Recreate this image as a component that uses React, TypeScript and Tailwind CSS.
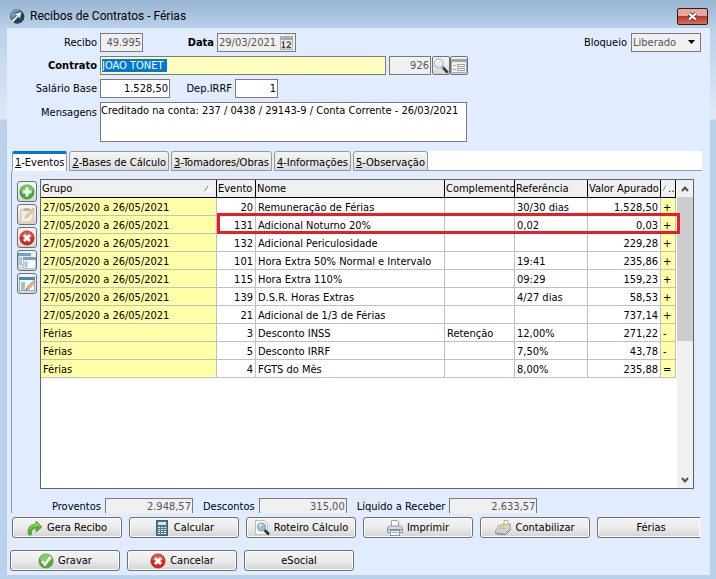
import React, { useEffect, useRef, useState } from "react";

const tabs = ["1-Eventos", "2-Bases de Cálculo", "3-Tomadores/Obras", "4-Informações", "5-Observação"];

const periodo = "27/05/2020 a 26/05/2021";

const eventos = [
  { grupo: periodo, evento: 20, nome: "Remuneração de Férias", compl: "", ref: "30/30 dias", valor: "1.528,50", sinal: "+" },
  { grupo: periodo, evento: 131, nome: "Adicional Noturno 20%", compl: "", ref: "0,02", valor: "0,03", sinal: "+" },
  { grupo: periodo, evento: 132, nome: "Adicional Periculosidade", compl: "", ref: "", valor: "229,28", sinal: "+" },
  { grupo: periodo, evento: 101, nome: "Hora Extra 50% Normal e Intervalo", compl: "", ref: "19:41", valor: "235,86", sinal: "+" },
  { grupo: periodo, evento: 115, nome: "Hora Extra 110%", compl: "", ref: "09:29", valor: "159,23", sinal: "+" },
  { grupo: periodo, evento: 139, nome: "D.S.R. Horas Extras", compl: "", ref: "4/27 dias", valor: "58,53", sinal: "+" },
  { grupo: periodo, evento: 21, nome: "Adicional de 1/3 de Férias", compl: "", ref: "", valor: "737,14", sinal: "+" },
  { grupo: "Férias", evento: 3, nome: "Desconto INSS", compl: "Retenção", ref: "12,00%", valor: "271,22", sinal: "-" },
  { grupo: "Férias", evento: 5, nome: "Desconto IRRF", compl: "", ref: "7,50%", valor: "43,78", sinal: "-" },
  { grupo: "Férias", evento: 4, nome: "FGTS do Mês", compl: "", ref: "8,00%", valor: "235,88", sinal: "=" },
];

/* ---------- icons ---------- */

function LogoIcon() {
  return (
    <svg width="16" height="16" viewBox="0 0 16 16">
      <circle cx="8" cy="8" r="7" fill="#3a5c66" />
      <path d="M1.500 6A7 7 0 0 1 12 2.200L5 5l2 2-4.500 4z" fill="#7f9aa6" />
      <path d="M2.500 12.500l5.500-5-2.500-1.500 7-2-1.500 7-1.500-2.500-5 5.500z" fill="#dce9ef" />
      <path d="M12.500 4.500L11 11l-2-1.500-4.500 5A7 7 0 0 0 14.800 6z" fill="#1f4450" />
    </svg>
  );
}

function CalendarIcon() {
  return (
    <svg width="13" height="15" viewBox="0 0 13 15">
      <rect x="0.500" y="2.500" width="12" height="12" fill="#ececec" stroke="#b4b4b4" />
      <rect x="0" y="1" width="13" height="4" fill="#a8a8a8" />
      <path d="M3 0v3M10 0v3" stroke="#e0e0e0" />
      <path d="M2 8l1.500-1.200V12.500M1.800 12.500h3.600" stroke="#4c4c4c" strokeWidth="1.300" fill="none" />
      <path d="M7 8c.2-1.600 3.600-1.500 3.500.4C10.400 10 7.500 11 7.200 12.500H11" stroke="#4c4c4c" strokeWidth="1.300" fill="none" />
    </svg>
  );
}

function LensIcon() {
  return (
    <svg width="18" height="18" viewBox="0 0 18 18">
      <path d="M10.500 10l6 6.500" stroke="#333" strokeWidth="3" />
      <path d="M9 9l2.500 2.500" stroke="#a5a5a5" strokeWidth="2" />
      <circle cx="6.500" cy="6" r="5" fill="#e2edf2" stroke="#b4bcbf" strokeWidth="1.400" />
      <path d="M3.500 6a3 3 0 0 1 3-3" stroke="#fff" strokeWidth="1.500" fill="none" />
    </svg>
  );
}

function FormIcon() {
  return (
    <svg width="16" height="16" viewBox="0 0 16 16">
      <rect x="0.500" y="2.500" width="15" height="12" rx="1" fill="#f0f0f0" stroke="#a8a8a8" />
      <rect x="0" y="1" width="16" height="3" fill="#a4a4a4" />
      <path d="M2 7.500h3M2 11.500h3" stroke="#a8a8a8" />
      <path d="M6.500 6.500h7v2h-7zM6.500 10.500h7v2h-7z" fill="#fff" stroke="#a0a0a0" />
    </svg>
  );
}

function PlusIcon() {
  return (
    <svg width="16" height="16" viewBox="0 0 16 16">
      <circle cx="8" cy="8" r="7" fill="#3fae35" stroke="#3c9a35" />
      <path d="M2 7a6 6 0 0 1 12 0c-4 1.500-8 1.500-12 0z" fill="#72cb64" />
      <path d="M8 3.500v9M3.500 8h9" stroke="#fff" strokeWidth="3" />
    </svg>
  );
}

function EditIcon() {
  return (
    <svg width="16" height="18" viewBox="0 0 16 18">
      <rect x="1" y="3" width="14" height="14" fill="#ddcfae" />
      <rect x="2.500" y="4.500" width="11" height="11" fill="#f2eee4" />
      <rect x="4.500" y="2" width="6" height="3" fill="#b9b9b9" />
      <path d="M6 12.500l1-3L14 2l1.800 1.500L9 11z" fill="#ecc9a0" stroke="#c8a47c" strokeWidth="0.600" />
      <path d="M9 16h5.500v-5z" fill="#e3d7b8" />
    </svg>
  );
}

function CrossIcon() {
  return (
    <svg width="16" height="16" viewBox="0 0 16 16">
      <circle cx="8" cy="8" r="7" fill="#d3281e" stroke="#b5261d" />
      <path d="M2 7a6 6 0 0 1 12 0c-4 1.500-8 1.500-12 0z" fill="#e0564a" />
      <path d="M5 5l6 6M11 5l-6 6" stroke="#fff" strokeWidth="3" />
    </svg>
  );
}

function WindowsIcon() {
  return (
    <svg width="18" height="18" viewBox="0 0 18 18">
      <rect x="0.500" y="1.500" width="12" height="11" fill="#e7eef4" stroke="#b3c6d4" />
      <rect x="0" y="1" width="13" height="3" fill="#6fa3c8" />
      <rect x="1" y="5" width="3" height="7" fill="#b6c4ce" />
      <rect x="5.500" y="6.500" width="12" height="10" fill="#f6f9fb" stroke="#b3c6d4" />
      <rect x="5" y="5" width="13" height="3" fill="#6fa3c8" />
      <rect x="6.500" y="9.500" width="3" height="6" fill="#b6c4ce" />
    </svg>
  );
}

function WindowEditIcon() {
  return (
    <svg width="18" height="18" viewBox="0 0 18 18">
      <rect x="1.500" y="2.500" width="15" height="13" fill="#f8fafb" stroke="#8fb2cc" />
      <rect x="1" y="2" width="16" height="3" fill="#3f88c2" />
      <rect x="3" y="7" width="4" height="8" fill="#b3bac0" />
      <path d="M8 15l1-3 6.500-6.500 1.800 1.800L11 14z" fill="#e3b080" stroke="#b98c60" strokeWidth="0.600" />
      <path d="M8 15l.6-1.800 1.200 1.200z" fill="#333" />
    </svg>
  );
}

function ArrowIcon() {
  return (
    <svg width="16" height="16" viewBox="0 0 16 16">
      <path d="M1.500 15C0 8 3 4 9 4.200V1l6 6-6 5V8.600C6 8.400 4 9.500 4.500 15z" fill="#5cb030" stroke="#4c9a28" strokeWidth="0.800" />
      <path d="M2.500 9C4 6 6 5.300 10 5.400V3.500L13 6.500" stroke="#a7e37d" fill="none" />
    </svg>
  );
}

function CalculatorIcon() {
  return (
    <svg width="16" height="16" viewBox="0 0 16 16">
      <rect x="2.500" y="0.500" width="11" height="15" fill="#4d7b8f" stroke="#3d6678" />
      <rect x="4" y="2" width="8" height="3" fill="#d6e8ef" />
      <path d="M4 7.500h8M4 9.500h8M4 11.500h8M4 13.500h8" stroke="#e8f2f6" strokeDasharray="2 1" />
    </svg>
  );
}

function ReportLensIcon() {
  return (
    <svg width="16" height="16" viewBox="0 0 16 16">
      <path d="M1.500 0.500h9l3 3v11h-12z" fill="#fafafa" stroke="#bcbcbc" />
      <path d="M10 9.500l5 5" stroke="#333" strokeWidth="2.600" />
      <circle cx="7.500" cy="7" r="4" fill="#8fc0dd" stroke="#9a9fa3" strokeWidth="1.200" />
      <path d="M5.500 7a2.500 2.500 0 0 1 2.500-2.500" stroke="#e5f5ff" strokeWidth="1.300" fill="none" />
    </svg>
  );
}

function PrinterIcon() {
  return (
    <svg width="16" height="16" viewBox="0 0 16 16">
      <path d="M4.500 7V.5h6l1 1V7" fill="#fff" stroke="#9aa0ad" />
      <path d="M.5 7.500l2-1.500h11l2 1.500v5h-15z" fill="#d7d9e0" stroke="#8f94a3" />
      <path d="M1 9.500h14" stroke="#8b90a0" />
      <rect x="3.500" y="10.500" width="9" height="5" fill="#f3f4f8" stroke="#8f94a3" />
      <path d="M5 12.500h6" stroke="#a7b4cf" />
    </svg>
  );
}

function LedgerIcon() {
  return (
    <svg width="16" height="16" viewBox="0 0 16 16">
      <path d="M9 5V.5h4V5" fill="#fff" stroke="#aab4bf" />
      <path d="M.5 10.500L4.500 5l11-1v5.500l-5 5L.5 13.500z" fill="#c3cfda" stroke="#8b9aa8" strokeWidth="0.800" />
      <path d="M1 13.500l9.500 1 5-5" stroke="#5f7f9c" fill="none" />
      <path d="M2 10L5.500 5.500l8.500-.8-3.500 5.600z" fill="#f3dfa0" />
      <path d="M5.500 7l6-.4M4.500 8.800l6-.3" stroke="#c49a45" strokeDasharray="1.500 1" />
    </svg>
  );
}

function CheckIcon() {
  return (
    <svg width="16" height="16" viewBox="0 0 16 16">
      <circle cx="8" cy="8" r="7" fill="#56ad3a" stroke="#4c9a38" />
      <path d="M2 7a6 6 0 0 1 12 0c-4 1.500-8 1.500-12 0z" fill="#86c96b" />
      <path d="M4 8l3 3.500L12.500 4" stroke="#fff" strokeWidth="2.600" fill="none" />
    </svg>
  );
}

function SortIcon() {
  return (
    <svg width="8" height="7" viewBox="0 0 8 7" className="shrink-0">
      <path d="M0.500 6.500L4 0.500" stroke="#8c8c8c" fill="none" />
      <path d="M4 0.500L7.500 6.500H0.500" stroke="#fff" fill="none" />
    </svg>
  );
}

/* ---------- controls ---------- */

const field = "h-[19px] border border-[#7a7a7a] px-px text-[11px] leading-[13px] outline-none";
const face = "border border-[#707070] bg-linear-to-b from-[#f4f4f4] via-[#ebebeb] via-50% to-[#d3d3d3]";

function ActionButton({ icon, children, cut }: { icon?: React.ReactNode; children: React.ReactNode; cut?: boolean }) {
  return (
    <button
      type="button"
      className={`${face} flex h-[21px] items-center justify-center gap-1 whitespace-nowrap shadow-[inset_0_0_0_1px_#fcfcfc] ${
        cut ? "w-[103px] rounded-l-[3px] border-r-0 pl-1" : "w-[110px] rounded-[3px]"
      }`}
    >
      {icon}
      <span>{children}</span>
    </button>
  );
}

function SideButton({ label, children }: { label: string; children: React.ReactNode }) {
  return (
    <button type="button" aria-label={label} className={`${face} flex h-[21px] w-5 items-center justify-center rounded-[3px]`}>
      {children}
    </button>
  );
}

function Total({ id, label, value }: { id: string; label: string; value: string }) {
  return (
    <div className="flex items-end gap-1">
      <label htmlFor={id}>{label}</label>
      <input
        id={id}
        readOnly
        value={value}
        className="h-[15px] w-[88px] border border-b-0 border-[#7a7a7a] bg-[#f0f0f0] px-px text-right text-[11px] leading-[13px] text-[#555] outline-none"
      />
    </div>
  );
}

export default function App() {
  const [tab, setTab] = useState(0);
  const [contrato, setContrato] = useState("JOAO TONET ");
  const contratoRef = useRef<HTMLInputElement>(null);

  useEffect(() => {
    contratoRef.current?.focus();
    contratoRef.current?.select();
  }, []);

  const th = "border-r border-b border-black bg-[#f0f0f0] pl-px text-left font-normal whitespace-nowrap overflow-hidden";
  const td = "border-r border-b border-[#c0c0c0] px-0.5 pt-0.5 whitespace-nowrap overflow-hidden";

  return (
    <div className="flex min-h-screen flex-col bg-[#b9d1ea] bg-[linear-gradient(to_bottom,#98b4d2_0px,#b9d1ea_28px,#dfe9f5_119px,#b9d1ea_120px)] pr-1.5 pb-1 pl-[7px] font-['DejaVu_Sans_Condensed','DejaVu_Sans',sans-serif] text-[11px] leading-[13px] text-black">
      <header className="flex h-7 items-center">
        <div className="flex flex-1 items-center gap-[5px] pt-1 pl-0.5">
          <LogoIcon />
          <h1 className="font-['Roboto',sans-serif] text-xs leading-4">Recibos de Contratos - Férias</h1>
        </div>
        <button
          type="button"
          aria-label="Fechar"
          className="mt-1 mr-0.5 flex h-[17px] w-[31px] items-center justify-center rounded-[2px] border border-[#43141c] bg-linear-to-b from-[#e8a79d] from-45% via-[#b8392a] via-50% to-[#d2705f]"
        >
          <svg width="11" height="9" viewBox="0 0 11 9">
            <path d="M2 1.500l7 6M9 1.500l-7 6" stroke="#4a3b45" strokeWidth="4" />
            <path d="M2 1.500l7 6M9 1.500l-7 6" stroke="#fff" strokeWidth="2.200" />
          </svg>
        </button>
      </header>

      <main className="flex flex-1 flex-col bg-[#e1edff] pb-1">
        <form className="flex flex-col gap-1 pt-[5px] pr-[9px]">
          <div className="flex items-center">
            <label htmlFor="recibo" className="w-[90px] text-right">Recibo</label>
            <input id="recibo" readOnly value="49.995" className={`${field} ml-[3px] w-[43px] bg-[#f0f0f0] text-right text-[#555]`} />
            <label htmlFor="data" className="w-[71px] text-right font-bold">Data</label>
            <div className="ml-[3px] flex h-[19px] w-[79px] items-center border border-[#7a7a7a] bg-[#f0f0f0] pr-0.5">
              <input id="data" readOnly value="29/03/2021" className="min-w-0 flex-1 px-px text-[#555] outline-none" />
              <button type="button" aria-label="Abrir calendário"><CalendarIcon /></button>
            </div>
            <label htmlFor="bloqueio" className="ml-auto">Bloqueio</label>
            <div className="relative ml-1">
              <select id="bloqueio" className={`${field} w-[70px] appearance-none bg-[#f0f0f0] text-[#555]`}>
                <option>Liberado</option>
              </select>
              <svg width="7" height="4" viewBox="0 0 7 4" className="pointer-events-none absolute top-[7px] right-1.5">
                <path d="M0 0h7L3.500 4z" fill="#000" />
              </svg>
            </div>
          </div>

          <div className="flex items-center">
            <label htmlFor="contrato" className="w-[90px] text-right font-bold">Contrato</label>
            <input
              id="contrato"
              ref={contratoRef}
              value={contrato}
              onChange={(e) => setContrato(e.target.value)}
              className={`${field} ml-[3px] w-[286px] bg-[#ffffc0] selection:bg-[#0078d7] selection:text-white`}
            />
            <input aria-label="Código do contrato" readOnly value="926" className={`${field} ml-[3px] w-[42px] bg-[#f0f0f0] text-right text-[#555]`} />
            <button type="button" aria-label="Pesquisar" className={`${face} ml-px flex h-[19px] w-[18px] items-center justify-center overflow-hidden rounded-[2px]`}>
              <LensIcon />
            </button>
            <button type="button" aria-label="Cadastro" className={`${face} flex h-[19px] w-[18px] items-center justify-center overflow-hidden rounded-[2px]`}>
              <FormIcon />
            </button>
          </div>

          <div className="flex items-center">
            <label htmlFor="salario" className="w-[90px] text-right">Salário Base</label>
            <input id="salario" defaultValue="1.528,50" className={`${field} ml-[3px] w-[70px] bg-white text-right`} />
            <label htmlFor="dep" className="w-[62px] text-right">Dep.IRRF</label>
            <input id="dep" defaultValue="1" className={`${field} ml-[3px] w-[43px] bg-white text-right`} />
          </div>

          <div className="flex items-start">
            <label htmlFor="mensagens" className="w-[90px] pt-1 text-right">Mensagens</label>
            <textarea
              id="mensagens"
              defaultValue="Creditado na conta: 237 / 0438 / 29143-9 / Conta Corrente - 26/03/2021"
              className="ml-[3px] h-10 w-[367px] resize-none border border-[#7a7a7a] bg-white pt-px text-[11px] leading-[13px] outline-none"
            />
          </div>
        </form>

        <div role="tablist" className="mt-[9px] mr-2 ml-[5px] flex h-5 items-end">
          {tabs.map((t, i) => (
            <button
              key={t}
              type="button"
              role="tab"
              aria-selected={tab === i}
              onClick={() => setTab(i)}
              className={
                tab === i
                  ? "h-5 rounded-t-[2px] border border-t-3 border-b-0 border-[#919b9c] border-t-[#0078d7] bg-white px-0.5 whitespace-nowrap"
                  : "ml-0.5 h-5 rounded-t-[3px] border border-[#919b9c] bg-linear-to-b from-[#f6f6f6] to-[#dcdcdc] px-0.5 pt-0.5 whitespace-nowrap"
              }
            >
              <u>{t[0]}</u>
              {t.slice(1)}
            </button>
          ))}
          <div className="h-5 flex-1 border-b border-[#919b9c] bg-white" />
        </div>

        <section className="mr-2 ml-1 flex flex-1 flex-col border-l border-[#919b9c] pt-2 pr-2 pl-[5px]">
          <div className="flex flex-1 gap-[3px]">
            <div className="flex flex-col gap-0.5 pt-0.5">
              <SideButton label="Incluir"><PlusIcon /></SideButton>
              <SideButton label="Alterar"><EditIcon /></SideButton>
              <SideButton label="Excluir"><CrossIcon /></SideButton>
              <SideButton label="Janelas"><WindowsIcon /></SideButton>
              <SideButton label="Editar janela"><WindowEditIcon /></SideButton>
            </div>

            <div className="relative flex flex-1 border border-[#646464] bg-white">
              <div className="flex-1 pr-px">
                <table className="w-full table-fixed border-separate border-spacing-0">
                  <colgroup>
                    <col className="w-[176px]" />
                    <col className="w-[39px]" />
                    <col />
                    <col className="w-[70px]" />
                    <col className="w-[73px]" />
                    <col className="w-[73px]" />
                    <col className="w-[15px]" />
                  </colgroup>
                  <thead>
                    <tr className="h-[18px]">
                      <th className={th}>
                        <div className="flex items-center justify-between pr-1">Grupo<SortIcon /></div>
                      </th>
                      <th className={th}>Evento</th>
                      <th className={th}>Nome</th>
                      <th className={th}>Complemento</th>
                      <th className={th}>Referência</th>
                      <th className={th}>Valor Apurado</th>
                      <th className={th}><div className="flex items-center"><SortIcon /><span className="-ml-0.5">..</span></div></th>
                    </tr>
                  </thead>
                  <tbody>
                    {eventos.map((e) => (
                      <tr key={e.evento} className="h-[18px]">
                        <td className={`${td} bg-[#ffffa8]`}>{e.grupo}</td>
                        <td className={`${td} text-right`}>{e.evento}</td>
                        <td className={td}>{e.nome}</td>
                        <td className={td}>{e.compl}</td>
                        <td className={td}>{e.ref}</td>
                        <td className={`${td} text-right`}>{e.valor}</td>
                        <td className={`${td} bg-[#ffffa8]`}>{e.sinal}</td>
                      </tr>
                    ))}
                  </tbody>
                </table>
              </div>

              {/* highlighted event row */}
              <div className="pointer-events-none absolute top-[33px] right-[13px] left-[176px] h-[21px] border-3 border-[#ed1c24]" />

              <div className="flex w-4 flex-col bg-[#f0f0f0]">
                <div className="flex h-[17px] items-center justify-center">
                  <svg width="8" height="6" viewBox="0 0 8 6"><path d="M1 5l3-3.500L7 5" stroke="#505050" strokeWidth="2" fill="none" /></svg>
                </div>
                <div className="h-36 bg-[#cdcdcd]" />
                <div className="mt-auto flex h-[17px] items-center justify-center">
                  <svg width="8" height="6" viewBox="0 0 8 6"><path d="M1 1l3 3.500L7 1" stroke="#505050" strokeWidth="2" fill="none" /></svg>
                </div>
              </div>
            </div>
          </div>

          <div className="mt-[9px] flex gap-2.5 pl-[35px]">
            <Total id="proventos" label="Proventos" value="2.948,57" />
            <Total id="descontos" label="Descontos" value="315,00" />
            <Total id="liquido" label="Líquido a Receber" value="2.633,57" />
          </div>
        </section>

        <div className="mt-1 flex gap-[7px] pl-[5px]">
          <ActionButton icon={<ArrowIcon />}>Gera Recibo</ActionButton>
          <ActionButton icon={<CalculatorIcon />}>Calcular</ActionButton>
          <ActionButton icon={<ReportLensIcon />}>Roteiro Cálculo</ActionButton>
          <ActionButton icon={<PrinterIcon />}>Imprimir</ActionButton>
          <ActionButton icon={<LedgerIcon />}>Contabilizar</ActionButton>
          <ActionButton cut>Férias</ActionButton>
        </div>
        <div className="mt-3 flex gap-[7px] pl-[3px]">
          <ActionButton icon={<CheckIcon />}>Gravar</ActionButton>
          <ActionButton icon={<CrossIcon />}>Cancelar</ActionButton>
          <ActionButton>eSocial</ActionButton>
        </div>
      </main>
    </div>
  );
}
